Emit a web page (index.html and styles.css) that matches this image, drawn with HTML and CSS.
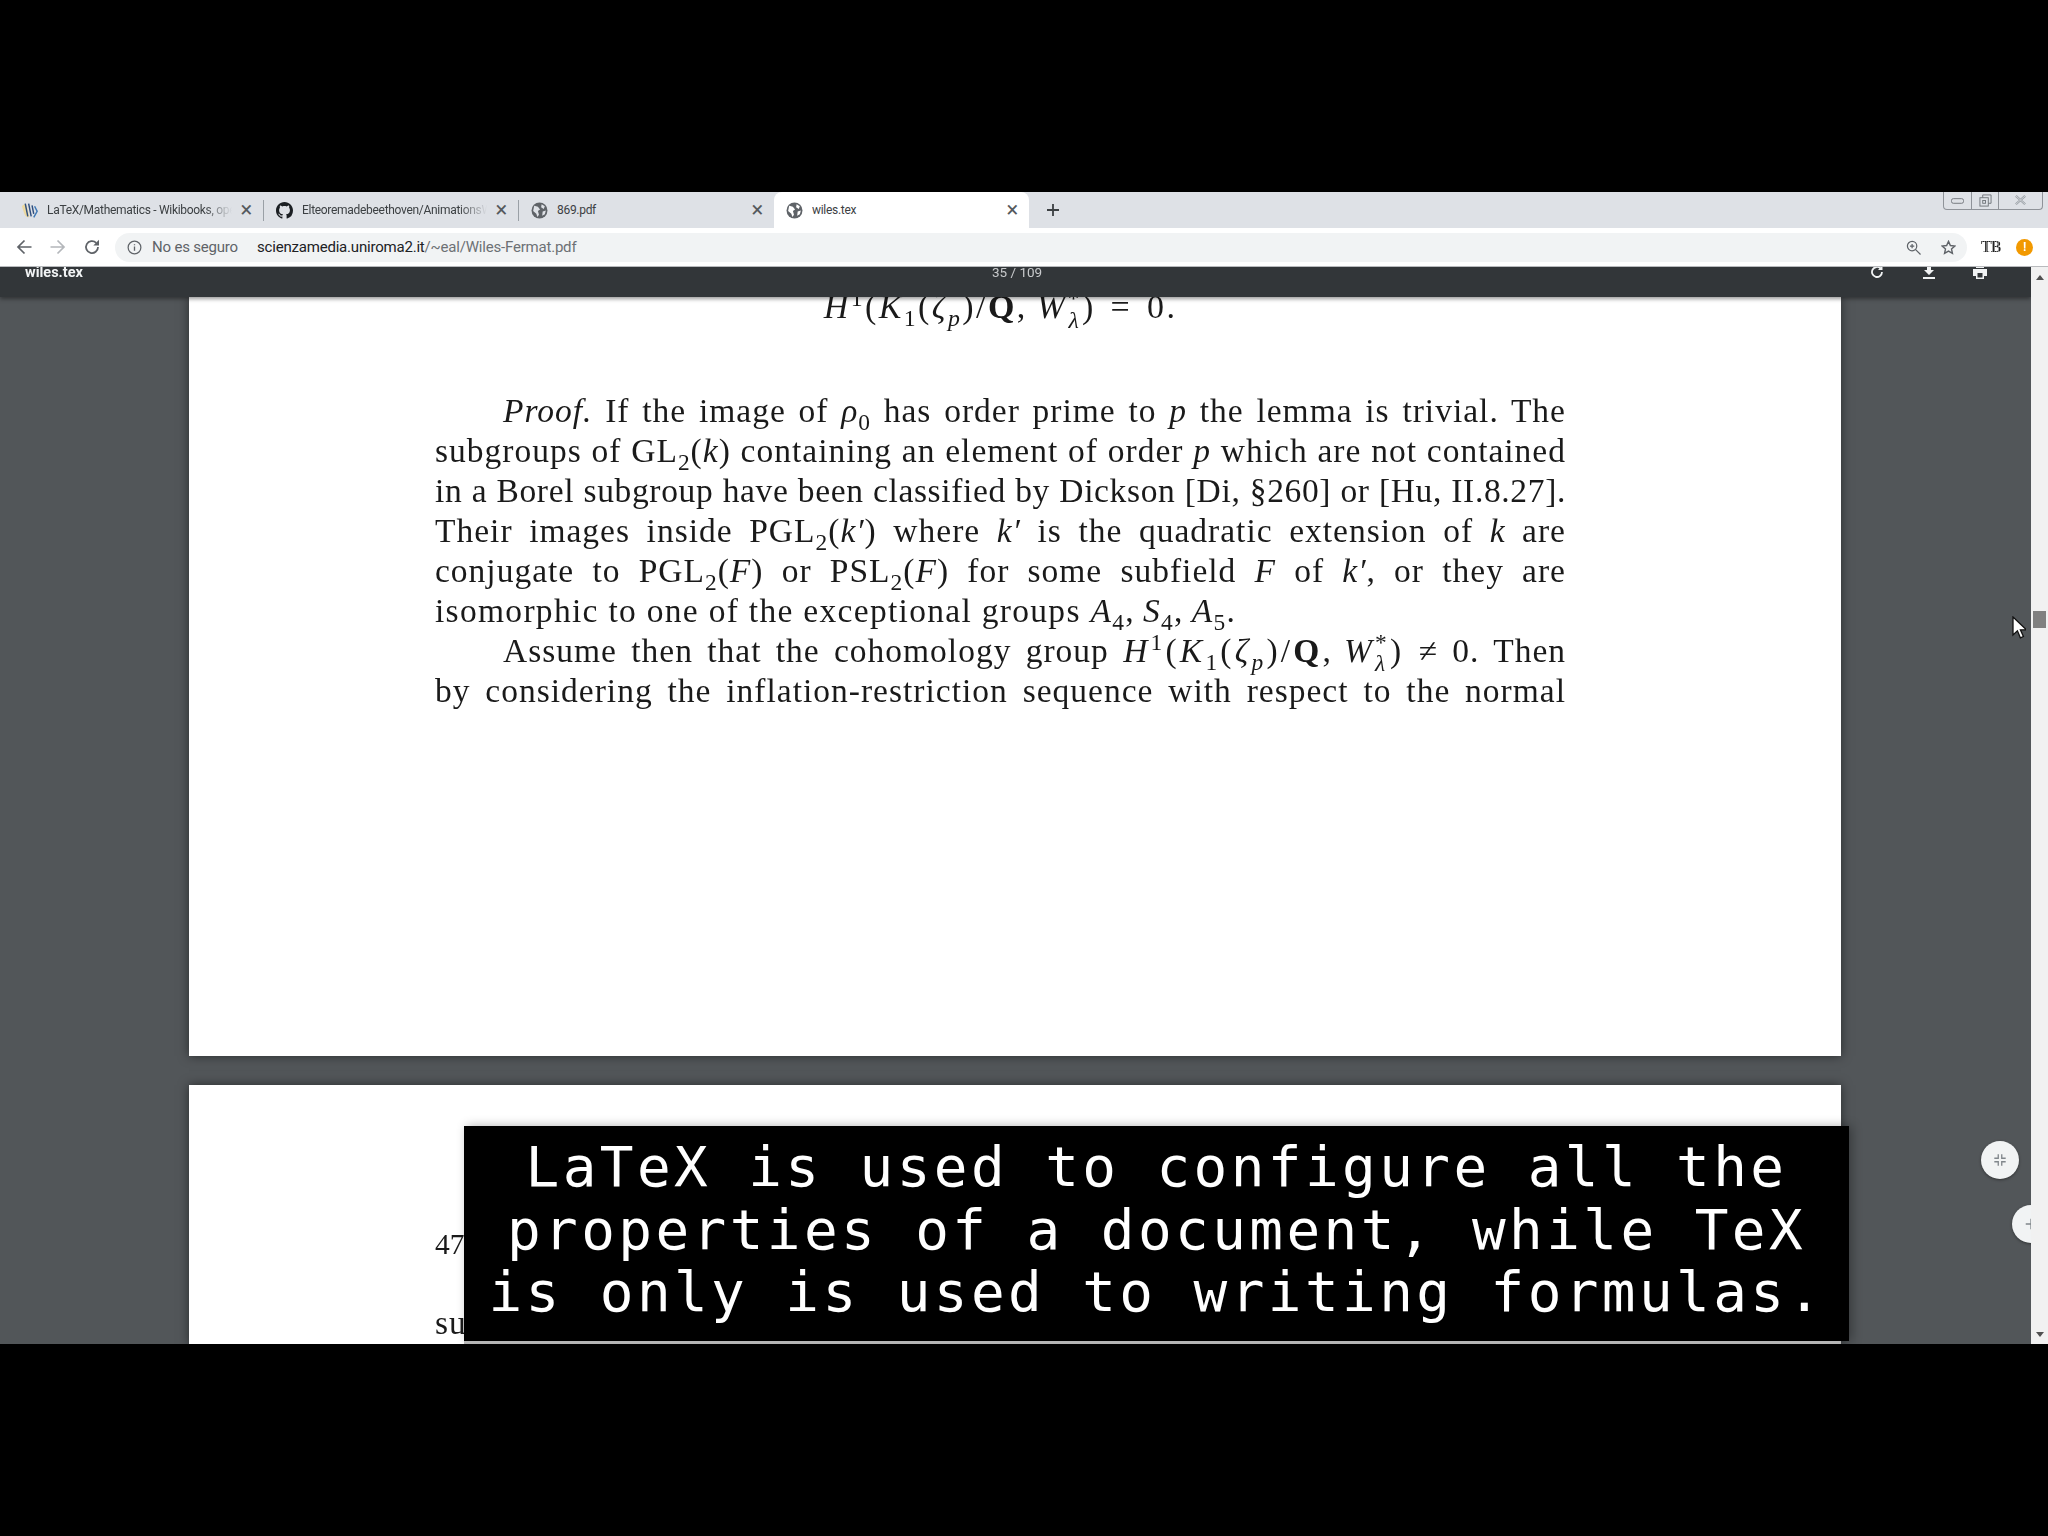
FILE: index.html
```html
<!DOCTYPE html>
<html lang="es">
<head>
    <meta charset="UTF-8">
    <meta name="viewport" content="width=device-width, initial-scale=1.0">
    <title>wiles.tex</title>
    <link rel="stylesheet" href="styles.css">
</head>
<body>

    <div class="letterbox-top"></div>

    <div class="browser">
        <div class="tabstrip">
            <div class="tab">
                <svg class="favicon" viewBox="0 0 20 20"><path d="M1 5c3-3 5-3 6 0l3 13c-3 0-5-1-6-4z" fill="#ecd9a0"/><path d="M5 2l3 15M9 2l3 15M13 4l2 10" fill="none" stroke="#2f4f7f" stroke-width="1.700"/><path d="M16 5l3 6-4 7" fill="none" stroke="#3f78b5" stroke-width="1.700"/></svg>
                <span class="tab-title tab-fade">LaTeX/Mathematics - Wikibooks, open books</span>
                <span class="tab-close">×</span>
            </div>
            <div class="tab-sep"></div>
            <div class="tab">
                <svg class="favicon" viewBox="0 0 16 16"><path fill="#1b1f23" d="M8 0C3.58 0 0 3.58 0 8c0 3.54 2.29 6.53 5.47 7.59.4.07.55-.17.55-.38 0-.19-.01-.82-.01-1.49-2.01.37-2.53-.49-2.69-.94-.09-.23-.48-.94-.82-1.13-.28-.15-.68-.52-.01-.53.63-.01 1.08.58 1.23.82.72 1.21 1.87.87 2.33.66.07-.52.28-.87.51-1.07-1.78-.2-3.64-.89-3.64-3.95 0-.87.31-1.59.82-2.15-.08-.2-.36-1.02.08-2.12 0 0 .67-.21 2.2.82.64-.18 1.32-.27 2-.27s1.36.09 2 .27c1.53-1.04 2.2-.82 2.2-.82.44 1.1.16 1.92.08 2.12.51.56.82 1.27.82 2.15 0 3.07-1.87 3.75-3.65 3.95.29.25.54.73.54 1.48 0 1.07-.01 1.93-.01 2.2 0 .21.15.46.55.38A8.01 8.01 0 0 0 16 8c0-4.42-3.58-8-8-8z"/></svg>
                <span class="tab-title tab-fade">Elteoremadebeethoven/AnimationsWithManim</span>
                <span class="tab-close">×</span>
            </div>
            <div class="tab-sep"></div>
            <div class="tab tab-wide">
                <svg class="favicon" viewBox="0 0 16 16"><circle cx="8" cy="8" r="7.500" fill="#5f6368"/><path d="M3 3.500l3.500 1 2 2.500-2 1.500 1 3.500-1.500 2-1-3-3-2.500zM10 2l3 2-1 2.500-2.500-1.500zM11 9l3-1-1 3.500-2.500 1.500z" fill="#dee1e6"/></svg>
                <span class="tab-title">869.pdf</span>
                <span class="tab-close">×</span>
            </div>
            <div class="tab tab-wide tab-active">
                <svg class="favicon" viewBox="0 0 16 16"><circle cx="8" cy="8" r="7.500" fill="#5f6368"/><path d="M3 3.500l3.500 1 2 2.500-2 1.500 1 3.500-1.500 2-1-3-3-2.500zM10 2l3 2-1 2.500-2.500-1.500zM11 9l3-1-1 3.500-2.500 1.500z" fill="#fff"/></svg>
                <span class="tab-title">wiles.tex</span>
                <span class="tab-close">×</span>
            </div>
            <svg class="new-tab" viewBox="0 0 14 14"><path d="M7 1v12M1 7h12" stroke="#3c4043" stroke-width="1.800"/></svg>
            <div class="window-controls">
                <span class="win-btn win-min"><svg viewBox="0 0 14 14"><rect x="0.500" y="5" width="13" height="5" rx="2" fill="none" stroke="#70757a"/></svg></span>
                <span class="win-btn win-max"><svg viewBox="0 0 14 14"><rect x="1" y="4" width="9" height="9" fill="none" stroke="#70757a"/><path d="M4 4V1h9v9h-3" fill="none" stroke="#70757a"/><rect x="4" y="7" width="3" height="3" fill="none" stroke="#70757a"/></svg></span>
                <span class="win-btn win-close"><svg viewBox="0 0 14 14"><path d="M2 2l10 9M12 2L2 11" stroke="#9aa0a6" stroke-width="2.400"/><path d="M2 2l10 9M12 2L2 11" stroke="#dee1e6" stroke-width="0.800"/></svg></span>
            </div>
        </div>

        <div class="toolbar">
            <svg class="nav-icon" viewBox="0 0 16 16"><path d="M15.500 8H2M8.500 1.500L2 8l6.500 6.500" fill="none" stroke="#5f6368" stroke-width="1.700"/></svg>
            <svg class="nav-icon" viewBox="0 0 16 16"><path d="M.5 8H14M7.500 1.500L14 8l-6.500 6.500" fill="none" stroke="#b4b7bb" stroke-width="1.700"/></svg>
            <svg class="nav-icon" viewBox="0 0 16 16"><path d="M14 8a6 6 0 1 1-1.800-4.200" fill="none" stroke="#5f6368" stroke-width="1.800"/><path d="M15 .8v5.700H9.300z" fill="#5f6368"/></svg>
            <div class="omnibox">
                <svg class="info-icon" viewBox="0 0 16 16"><circle cx="8" cy="8" r="6.800" fill="none" stroke="#5f6368" stroke-width="1.300"/><path d="M8 7v4.500M8 4.400v1.300" stroke="#5f6368" stroke-width="1.400"/></svg>
                <span class="not-secure">No es seguro</span>
                <span class="url"><b>scienzamedia.uniroma2.it</b>/~eal/Wiles-Fermat.pdf</span>
                <svg class="zoom-icon" viewBox="0 0 16 16"><circle cx="6.500" cy="6.500" r="5" fill="none" stroke="#5f6368" stroke-width="1.300"/><path d="M10 10l5.500 5.500M4.200 6.500h4.600M6.500 4.200v4.600" stroke="#5f6368" stroke-width="1.300"/></svg>
                <svg class="star-icon" viewBox="0 0 16 16"><path d="M8 1.500l2 4.400 4.800.5-3.600 3.200 1 4.700L8 11.900l-4.200 2.400 1-4.700L1.200 6.400 6 5.900z" fill="none" stroke="#5f6368" stroke-width="1.500"/></svg>
            </div>
            <span class="ext-tb">TB</span>
            <span class="alert-badge">!</span>
        </div>

        <div class="viewer">
            <div class="viewer-main">
                <div class="pdf-bar">
                    <span class="pdf-name">wiles.tex</span>
                    <span class="pdf-pages">35 / 109</span>
                    <div class="pdf-actions">
                        <svg class="pdf-icon" viewBox="0 0 16 16"><path d="M13 8a5 5 0 1 1-1.500-3.600" fill="none" stroke="#f1f3f4" stroke-width="1.800"/><path d="M13.500 1.500v4.500H9z" fill="#f1f3f4"/></svg>
                        <svg class="pdf-icon" viewBox="0 0 16 16"><path d="M6 1h4v5h3L8 11 3 6h3zM2 13h12v2H2z" fill="#f1f3f4"/></svg>
                        <svg class="pdf-icon" viewBox="0 0 16 16"><path d="M4 1h8v3H4zM1 5h14v7h-3v3H4v-3H1z" fill="#f1f3f4"/><rect x="5.500" y="9" width="5" height="4.500" fill="#323639"/></svg>
                    </div>
                </div>

                <div class="pages">
                    <div class="page page-one">
                        <p class="display-math"><i>H</i><sup>1</sup>(<i>K</i><sub>1</sub>(<i>ζ<sub>p</sub></i>)/<b>Q</b>,&thinsp;<i>W</i><span class="subsup"><span>*</span><i>λ</i></span>) = 0.</p>
                        <div class="body-text">
                            <p class="line indent"><i>Proof.</i> If the image of <i>ρ</i><sub>0</sub> has order prime to <i>p</i> the lemma is trivial. The</p>
                            <p class="line">subgroups of GL<sub>2</sub>(<i>k</i>) containing an element of order <i>p</i> which are not contained</p>
                            <p class="line line-tight">in a Borel subgroup have been classified by Dickson [Di, §260] or [Hu, II.8.27].</p>
                            <p class="line">Their images inside PGL<sub>2</sub>(<i>k′</i>) where <i>k′</i> is the quadratic extension of <i>k</i> are</p>
                            <p class="line">conjugate to PGL<sub>2</sub>(<i>F</i>) or PSL<sub>2</sub>(<i>F</i>) for some subfield <i>F</i> of <i>k′</i>, or they are</p>
                            <p class="line line-last">isomorphic to one of the exceptional groups <i>A</i><sub>4</sub>,&thinsp;<i>S</i><sub>4</sub>,&thinsp;<i>A</i><sub>5</sub>.</p>
                            <p class="line indent">Assume then that the cohomology group <span class="math-run"><i>H</i><sup>1</sup>(<i>K</i><sub>1</sub>(<i>ζ<sub>p</sub></i>)/<b>Q</b>,&thinsp;<i>W</i><span class="subsup"><span>*</span><i>λ</i></span>)</span> ≠ 0. Then</p>
                            <p class="line">by considering the inflation-restriction sequence with respect to the normal</p>
                        </div>
                    </div>
                    <div class="page page-two">
                        <p class="page-two-num">47</p>
                        <p class="page-two-line">su</p>
                    </div>
                </div>

                <div class="fab fab-fit"><svg viewBox="0 0 16 16"><path d="M6 1.500V6H1.500M10 1.500V6h4.500M6 14.500V10H1.500M10 14.500V10h4.500" fill="none" stroke="#80868b" stroke-width="1.500"/></svg></div>
                <div class="fab fab-zoom"><svg viewBox="0 0 16 16"><path d="M8 2v12M2 8h12" stroke="#80868b" stroke-width="1.500"/></svg></div>
                <svg class="cursor" viewBox="0 0 14 23"><path d="M1 1v18l4.400-4.200 3 7 3-1.300-3-6.700h6z" fill="#fff" stroke="#111" stroke-width="1.300"/></svg>
            </div>

            <div class="scrollbar">
                <span class="arrow-up"></span>
                <span class="thumb"></span>
                <span class="arrow-down"></span>
            </div>
        </div>
    </div>

    <div class="letterbox-bottom"></div>

    <div class="caption">
        <span>LaTeX is used to configure all the</span>
        <span>properties of a document, while TeX</span>
        <span>is only is used to writing formulas.</span>
    </div>

</body>
</html>
```
FILE: styles.css
```css
html, body {
    margin: 0;
    height: 1536px;
    background-color: #000;
    overflow: hidden;
}
body {
    display: flex;
    flex-direction: column;
    font-family: "Roboto", "Liberation Sans", sans-serif;
}
p {
    margin: 0;
}
.letterbox-top, .letterbox-bottom {
    height: 192px;
    background-color: #000;
}
.browser {
    height: 1152px;
    display: flex;
    flex-direction: column;
    filter: blur(0.4px);
}

/* tabs */
.tabstrip {
    height: 36px;
    flex: none;
    display: flex;
    align-items: stretch;
    background-color: #dee1e6;
    padding-left: 9px;
}
.tab {
    width: 254px;
    padding: 0 11px 0 12px;
    box-sizing: border-box;
    display: flex;
    align-items: center;
    gap: 9px;
    font-size: 12px;
    color: #3c4043;
    letter-spacing: -0.3px;
}
.tab-wide {
    width: 255px;
}
.tab-sep {
    width: 1px;
    margin: 8px 0 7px;
    background-color: #9aa0a6;
}
.tab-active {
    background-color: #fff;
    border-radius: 8px 8px 0 0;
}
.favicon {
    width: 17px;
    height: 17px;
    flex: none;
}
.tab-title {
    flex: 1;
    min-width: 0;
    overflow: hidden;
    white-space: nowrap;
}
.tab-fade {
    -webkit-mask-image: linear-gradient(90deg, #000 85%, transparent);
    mask-image: linear-gradient(90deg, #000 85%, transparent);
}
.tab-close {
    font-size: 22px;
    line-height: 20px;
    color: #55595d;
}
.new-tab {
    width: 14px;
    height: 14px;
    margin: 11px 0 0 17px;
}
.window-controls {
    margin-left: auto;
    margin-right: 5px;
    display: flex;
    height: 18px;
    border: 1px solid #8f9399;
    border-top: none;
    border-radius: 0 0 4px 4px;
    box-sizing: border-box;
}
.win-btn {
    display: flex;
    align-items: center;
    justify-content: center;
    border-right: 1px solid #8f9399;
}
.win-btn svg {
    width: 13px;
    height: 13px;
}
.win-min {
    width: 27px;
}
.win-max {
    width: 26px;
}
.win-close {
    width: 43px;
    border-right: none;
}

/* address bar */
.toolbar {
    height: 39px;
    flex: none;
    background-color: #fff;
    display: flex;
    align-items: center;
    padding-left: 16px;
    border-bottom: 1px solid #b8babd;
    box-sizing: border-box;
}
.nav-icon {
    width: 16px;
    height: 16px;
    margin-right: 18px;
}
.omnibox {
    width: 1852px;
    height: 29px;
    margin-left: -3px;
    background-color: #f1f3f4;
    border-radius: 15px;
    display: flex;
    align-items: center;
    box-sizing: border-box;
    padding: 0 11px 0 12px;
    font-size: 15px;
    letter-spacing: -0.2px;
}
.info-icon {
    width: 15px;
    height: 15px;
    margin-right: 10px;
}
.not-secure {
    color: #5f6368;
    width: 105px;
}
.url {
    color: #6d7175;
    flex: 1;
}
.url b {
    font-weight: 400;
    color: #202124;
}
.zoom-icon, .star-icon {
    width: 15px;
    height: 15px;
}
.zoom-icon {
    margin-right: 20px;
}
.ext-tb {
    margin-left: 14px;
    width: 20px;
    font-family: "Liberation Serif", serif;
    font-size: 16px;
    font-weight: 700;
    letter-spacing: -1px;
    line-height: 18px;
    white-space: nowrap;
    color: transparent;
    background: repeating-linear-gradient(90deg, #222 0 1px, #777 1px 2px);
    -webkit-background-clip: text;
    background-clip: text;
}
.alert-badge {
    margin-left: 15px;
    width: 17px;
    height: 17px;
    border-radius: 50%;
    background-color: #f29900;
    color: #fff;
    font-size: 12px;
    font-weight: 700;
    line-height: 17px;
    text-align: center;
}

/* pdf viewer */
.viewer {
    flex: 1;
    min-height: 0;
    display: flex;
}
.viewer-main {
    flex: 1;
    min-width: 0;
    display: flex;
    flex-direction: column;
    position: relative;
    overflow: hidden;
}
.pdf-bar {
    height: 30px;
    flex: none;
    background-color: #323639;
    color: #f1f3f4;
    display: flex;
    align-items: flex-start;
    position: relative;
    box-shadow: 0 2px 4px rgba(0, 0, 0, 0.4);
    z-index: 1;
}
.pdf-name {
    margin-left: 25px;
    font-size: 14.5px;
    font-weight: 700;
    line-height: 12px;
    width: 967px;
}
.pdf-pages {
    font-size: 13.5px;
    line-height: 10px;
    color: #c8cacc;
}
.pdf-actions {
    margin-left: auto;
    margin-right: 43px;
    display: flex;
    gap: 35.5px;
}
.pdf-icon {
    width: 16px;
    height: 16px;
    margin-top: -3px;
}
.pages {
    flex: 1;
    min-height: 0;
    overflow: hidden;
    background-color: #525659;
    padding-left: 189px;
}
.scrollbar {
    width: 17px;
    flex: none;
    background-color: #f1f1f1;
    display: flex;
    flex-direction: column;
    align-items: center;
}
.arrow-up {
    margin-top: 8px;
    border: 4.5px solid transparent;
    border-top: none;
    border-bottom: 5px solid #505050;
}
.thumb {
    width: 13px;
    height: 17px;
    margin-top: 331px;
    background-color: #808080;
}
.arrow-down {
    margin-top: auto;
    margin-bottom: 7px;
    border: 4.5px solid transparent;
    border-bottom: none;
    border-top: 5px solid #505050;
}
.page {
    width: 1652px;
    background-color: #fff;
    box-sizing: border-box;
    font-family: "Liberation Serif", serif;
    color: #1a1a1a;
    overflow: hidden;
    box-shadow: 0 0 10px rgba(0, 0, 0, 0.5);
}
.page-one {
    height: 759px;
    padding: 0 275px 0 246px;
}
.page-two {
    height: 260px;
    margin-top: 29px;
    padding: 139px 0 0 246px;
}
.display-math {
    height: 40px;
    font-size: 34px;
    line-height: 40px;
    letter-spacing: 2.4px;
    word-spacing: 4px;
    margin-top: -10px;
    text-align: center;
}
.body-text {
    margin-top: 64px;
    font-size: 33.5px;
    letter-spacing: 1px;
}
.line {
    height: 40px;
    line-height: 40px;
    white-space: nowrap;
    text-align: justify;
    text-align-last: justify;
}
.line-tight {
    letter-spacing: 0.65px;
}
.line-last {
    text-align-last: left;
    letter-spacing: 1.3px;
}
.indent {
    padding-left: 68px;
}
.math-run {
    letter-spacing: 3.2px;
}
sub, sup {
    font-size: 0.7em;
    line-height: 0;
}
.subsup {
    display: inline-flex;
    flex-direction: column;
    font-size: 0.7em;
    line-height: 0.9em;
    vertical-align: 0.5em;
}
.page-two-num, .page-two-line {
    font-size: 33.5px;
    line-height: 40px;
    letter-spacing: 1px;
}
.page-two-num {
    font-size: 29.5px;
    letter-spacing: 0;
}
.page-two-line {
    margin-top: 39px;
}

/* floating buttons */
.fab {
    position: absolute;
    width: 38px;
    height: 38px;
    border-radius: 50%;
    background-color: #f1f3f4;
    display: flex;
    align-items: center;
    justify-content: center;
    box-shadow: 0 1px 3px rgba(0, 0, 0, 0.4);
}
.fab svg {
    width: 14px;
    height: 14px;
}
.fab-fit {
    left: 1981px;
    top: 874px;
}
.fab-zoom {
    left: 2012px;
    top: 938px;
    justify-content: flex-start;
    padding-left: 12px;
    box-sizing: border-box;
}
.cursor {
    position: absolute;
    left: 2012px;
    top: 349px;
    width: 14px;
    height: 23px;
    z-index: 3;
}

/* subtitle burned over the video */
.caption {
    position: absolute;
    left: 464px;
    top: 1126px;
    width: 1385px;
    height: 215px;
    background-color: #000;
    display: flex;
    flex-direction: column;
    align-items: center;
    padding-top: 10px;
    box-sizing: border-box;
    color: #fff;
    font-family: "DejaVu Sans Mono", monospace;
    font-size: 56px;
    line-height: 62.5px;
    letter-spacing: 3.4px;
    white-space: nowrap;
    box-shadow: 3px 0 10px rgba(0, 0, 0, 0.3);
}
.caption::after {
    content: "";
    position: absolute;
    left: 0;
    top: 100%;
    width: 1377px;
    height: 3px;
    background-color: #b5b5b5;
}
```
